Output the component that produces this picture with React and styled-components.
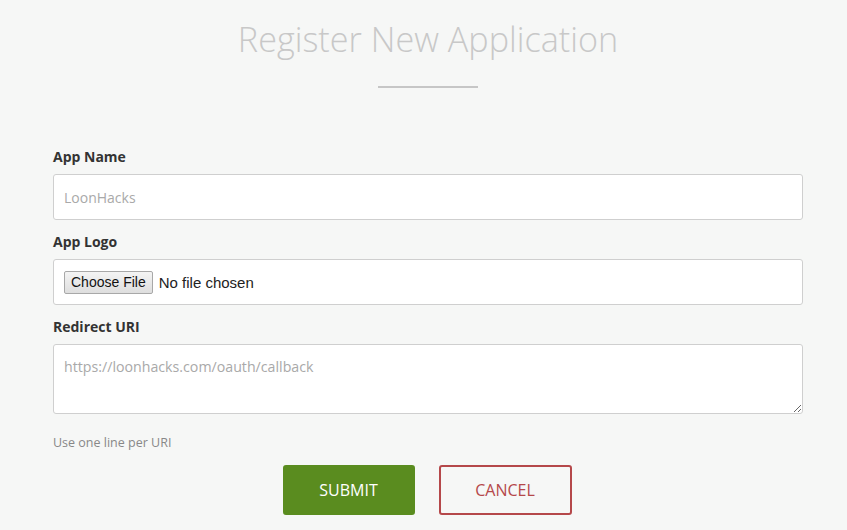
import React from "react";
import styled, { createGlobalStyle } from "styled-components";

const Global = createGlobalStyle`
  html, body { margin: 0; padding: 0; background: #f6f7f6; }
  body { font-family: "Open Sans", "Liberation Sans", sans-serif; color: #333; }
  * { box-sizing: border-box; }
`;

const Page = styled.div`
  width: 847px;
  min-height: 530px;
  background: #f6f7f6;
  padding: 16px 44px 0 53px;
`;

const Header = styled.header`
  display: flex;
  flex-direction: column;
  align-items: center;
  margin-bottom: 59px;
`;

const Title = styled.h1`
  margin: 0;
  font-family: "Open Sans", sans-serif;
  font-weight: 300;
  font-size: 34.2px;
  line-height: 46px;
  color: #c8c8c8;
`;

const Divider = styled.div`
  width: 100px;
  height: 2px;
  background: #c6c6c6;
  margin-top: 24px;
`;

const Form = styled.form`
  display: flex;
  flex-direction: column;
  width: 750px;
`;

const Label = styled.label`
  font-size: 14px;
  font-weight: 700;
  color: #333;
  line-height: 20px;
  margin-bottom: 7px;
`;

const Field = styled.div`
  display: flex;
  flex-direction: column;
  margin-bottom: ${(p) => (p.$last ? "0" : "12px")};
`;

const TextInput = styled.input`
  height: 46px;
  width: 100%;
  border: 1px solid #cfcfcf;
  border-radius: 3px;
  background: #fff;
  padding: 0 10px;
  font-family: "Open Sans", sans-serif;
  font-size: 14px;
  color: #555;
  outline: none;
  &::placeholder { color: #a9a9a9; }
`;

const FileBox = styled.div`
  height: 46px;
  border: 1px solid #cfcfcf;
  border-radius: 3px;
  background: #fff;
  display: flex;
  align-items: center;
  padding: 0 10px;
`;

const FileInput = styled.input`
  font-family: "Liberation Sans", Arial, sans-serif;
  font-size: 15px;
  color: #222;
  &::file-selector-button {
    font-family: "Liberation Sans", Arial, sans-serif;
    font-size: 14px;
    color: #111;
    background: linear-gradient(#f4f4f4, #dedede);
    border: 1px solid #a8a8a8;
    border-radius: 2px;
    padding: 2px 6px;
    height: 23px;
    margin-right: 6px;
  }
`;

const TextArea = styled.textarea`
  height: 70px;
  width: 100%;
  border: 1px solid #cfcfcf;
  border-radius: 3px;
  background: #fff;
  padding: 12px 10px;
  font-family: "Open Sans", sans-serif;
  font-size: 14.2px;
  line-height: 20px;
  resize: vertical;
  outline: none;
  display: block;
  &::placeholder { color: #a9a9a9; }
`;

const Help = styled.p`
  margin: 21px 0 0;
  font-size: 12.5px;
  line-height: 16px;
  color: #888;
`;

const Actions = styled.div`
  display: flex;
  justify-content: center;
  gap: 24px;
  margin-top: 14px;
  padding-right: 2px;
`;

const Button = styled.button`
  width: ${(p) => (p.$variant === "cancel" ? "133px" : "132px")};
  height: 50px;
  border-radius: 3px;
  font-family: "Open Sans", sans-serif;
  font-size: 16px;
  text-transform: uppercase;
  cursor: pointer;
  background: ${(p) => (p.$variant === "cancel" ? "transparent" : "#5a8c1f")};
  color: ${(p) => (p.$variant === "cancel" ? "#b5484a" : "#fff")};
  border: 2px solid ${(p) => (p.$variant === "cancel" ? "#b5484a" : "#5a8c1f")};
`;

export default function App() {
  return (
    <Page>
      <Global />
      <Header>
        <Title>Register New Application</Title>
        <Divider />
      </Header>
      <Form onSubmit={(e) => e.preventDefault()}>
        <Field>
          <Label htmlFor="name">App Name</Label>
          <TextInput id="name" placeholder="LoonHacks" />
        </Field>
        <Field>
          <Label htmlFor="logo">App Logo</Label>
          <FileBox>
            <FileInput id="logo" type="file" />
          </FileBox>
        </Field>
        <Field $last>
          <Label htmlFor="uri">Redirect URI</Label>
          <TextArea id="uri" placeholder="https://loonhacks.com/oauth/callback" />
        </Field>
        <Help>Use one line per URI</Help>
        <Actions>
          <Button type="submit">Submit</Button>
          <Button type="button" $variant="cancel">Cancel</Button>
        </Actions>
      </Form>
    </Page>
  );
}
